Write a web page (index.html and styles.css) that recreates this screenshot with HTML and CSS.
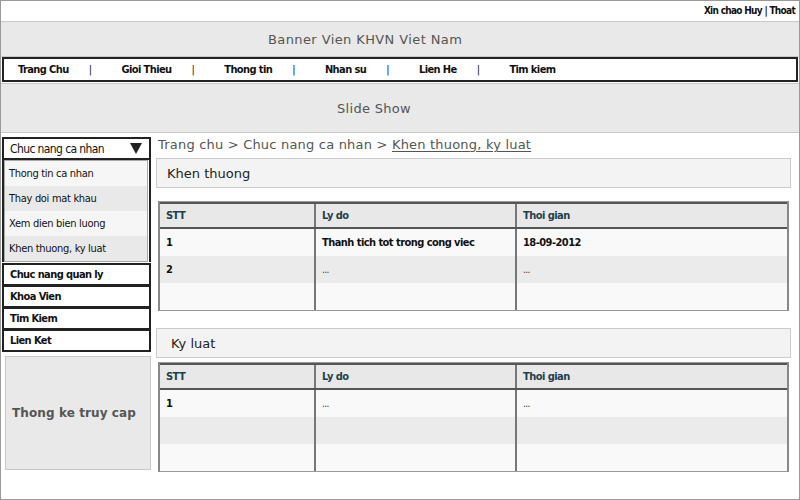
FILE: index.html
```html
<!DOCTYPE html>
<html>
<head>
<meta charset="utf-8">
<link rel="stylesheet" href="styles.css">
</head>
<body>
<div class="page">
  <div class="topbar">Xin chao Huy | Thoat</div>
  <div class="banner">Banner Vien KHVN Viet Nam</div>
  <div class="nav">
    <span class="nav-item">Trang Chu</span><span class="sep">|</span>
    <span class="nav-item">Gioi Thieu</span><span class="sep">|</span>
    <span class="nav-item">Thong tin</span><span class="sep">|</span>
    <span class="nav-item">Nhan su</span><span class="sep">|</span>
    <span class="nav-item">Lien He</span><span class="sep">|</span>
    <span class="nav-item">Tim kiem</span>
  </div>
  <div class="slide">Slide Show</div>
  <div class="content">
    <div class="sidebar">
      <div class="accordion">
        <div class="acc-head"><span>Chuc nang ca nhan</span><span class="tri"></span></div>
        <div class="acc-list">
          <div class="acc-item">Thong tin ca nhan</div>
          <div class="acc-item alt">Thay doi mat khau</div>
          <div class="acc-item">Xem dien bien luong</div>
          <div class="acc-item alt">Khen thuong, ky luat</div>
        </div>
      </div>
      <div class="side-link">Chuc nang quan ly</div>
      <div class="side-link">Khoa Vien</div>
      <div class="side-link">Tim Kiem</div>
      <div class="side-link">Lien Ket</div>
      <div class="stats">Thong ke truy cap</div>
    </div>
    <div class="main">
      <div class="crumb">Trang chu &gt; Chuc nang ca nhan &gt; <u>Khen thuong, ky luat</u></div>
      <div class="panel">Khen thuong</div>
      <div class="table">
        <div class="row head"><div class="c1">STT</div><div class="c2">Ly do</div><div class="c3">Thoi gian</div></div>
        <div class="row"><div class="c1">1</div><div class="c2">Thanh tich tot trong cong viec</div><div class="c3">18-09-2012</div></div>
        <div class="row alt"><div class="c1">2</div><div class="c2 dots">...</div><div class="c3 dots">...</div></div>
        <div class="row"><div class="c1"></div><div class="c2"></div><div class="c3"></div></div>
      </div>
      <div class="panel panel2">Ky luat</div>
      <div class="table table2">
        <div class="row head"><div class="c1">STT</div><div class="c2">Ly do</div><div class="c3">Thoi gian</div></div>
        <div class="row"><div class="c1">1</div><div class="c2 dots">...</div><div class="c3 dots">...</div></div>
        <div class="row alt"><div class="c1"></div><div class="c2"></div><div class="c3"></div></div>
        <div class="row"><div class="c1"></div><div class="c2"></div><div class="c3"></div></div>
      </div>
    </div>
  </div>
</div>
</body>
</html>
```
FILE: styles.css
```css
* { box-sizing: border-box; }
body { margin: 0; background: #fff; }
.page {
  width: 800px; height: 500px;
  border: 1px solid #9a9a9a;
  font-family: "DejaVu Sans Condensed", "DejaVu Sans", sans-serif;
  color: #111;
  overflow: hidden;
}
.topbar {
  height: 20px;
  text-align: right;
  padding-right: 4px;
  font-size: 10px;
  font-weight: bold;
  line-height: 19px;
  letter-spacing: -0.7px;
}
.banner {
  height: 36px;
  background: #e9e9e9;
  border-top: 1px solid #c8c8c8;
  border-bottom: 1px solid #c8c8c8;
  font-family: "DejaVu Sans", sans-serif;
  font-size: 13px;
  color: #555;
  display: flex; align-items: center;
  padding-left: 267px;
  letter-spacing: 0.4px;
}
.nav {
  height: 25px;
  margin: 0 1px;
  border: 2px solid #222;
  display: flex; align-items: center;
  padding-left: 14px;
  font-size: 11px;
  font-weight: bold;
  letter-spacing: -0.6px;
}
.sep { margin: 0 30px 0 20px; font-weight: normal; color: #222; }
.slide {
  height: 50px;
  margin-top: 1px;
  background: #e9e9e9;
  border-top: 1px solid #c8c8c8;
  border-bottom: 1px solid #c8c8c8;
  font-family: "DejaVu Sans", sans-serif;
  font-size: 13px;
  color: #555;
  display: flex; align-items: center;
  padding-left: 336px;
  letter-spacing: 0.3px;
}
.content {
  display: flex;
  gap: 5px;
  padding: 4px 8px 0 1px;
}
.sidebar { width: 149px; flex: none; }
.accordion {
  border: 2px solid #222;
  border-bottom: none;
}
.acc-head {
  height: 21px;
  border-bottom: 2px solid #222;
  display: flex; align-items: center; justify-content: space-between;
  padding: 0 7px 0 6px;
  font-size: 12px;
  letter-spacing: -0.6px;
}
.tri {
  width: 0; height: 0;
  border-left: 6px solid transparent;
  border-right: 6px solid transparent;
  border-top: 11px solid #222;
}
.acc-list {
  border: 1px solid #aaa;
  margin: 0 1px 0 0;
}
.acc-item {
  height: 25px;
  display: flex; align-items: center;
  padding-left: 4px;
  font-size: 11px;
  letter-spacing: -0.3px;
  background: #f6f6f6;
}
.acc-item.alt { background: #e9e9e9; }
.side-link {
  height: 23px;
  border: 2px solid #222;
  margin-top: -1px;
  display: flex; align-items: center;
  padding-left: 6px;
  font-size: 11px;
  font-weight: bold;
  letter-spacing: -0.6px;
}
.accordion + .side-link { margin-top: 1px; }
.stats {
  margin: 4px 0 0 3px;
  height: 114px;
  background: #e9e9e9;
  border: 1px solid #c8c8c8;
  display: flex; align-items: center;
  padding-left: 6px;
  font-family: "DejaVu Sans", sans-serif;
  font-weight: bold;
  font-size: 12px;
  color: #555;
  letter-spacing: 0.1px;
}
.main { flex: 1; }
.crumb {
  height: 21px;
  font-family: "DejaVu Sans", sans-serif;
  font-size: 13px;
  color: #555;
  padding-left: 2px;
  line-height: 16px;
  letter-spacing: 0.2px;
}
.crumb u { text-underline-offset: 2px; }
.panel {
  height: 30px;
  background: #f3f3f3;
  border: 1px solid #ccc;
  display: flex; align-items: center;
  padding-left: 10px;
  font-family: "DejaVu Sans", sans-serif;
  font-size: 13px;
  color: #222;
}
.panel2 { margin-top: 17px; padding-left: 14px; }
.table {
  margin: 13px 2px 0 2px;
  border: 1px solid #999;
  border-left: 2px solid #888;
  border-right: 2px solid #888;
}
.table2 { margin-top: 4px; }
.row { display: flex; height: 27px; background: #f9f9f9; }
.row.alt { background: #ebebeb; }
.row > div {
  display: flex; align-items: center;
  padding-left: 6px;
  font-size: 11px;
  font-weight: bold;
  letter-spacing: -0.55px;
}
.c1 { width: 156px; border-right: 2px solid #777; }
.c2 { width: 201px; border-right: 2px solid #777; }
.c3 { flex: 1; }
.row.head {
  height: 27px;
  background: #e8e8e8;
  border-top: 2px solid #555;
  border-bottom: 2px solid #555;
}
.row.head > div { color: #1d3f4c; }
.dots { font-weight: normal !important; font-size: 10px !important; color: #333; }
```
